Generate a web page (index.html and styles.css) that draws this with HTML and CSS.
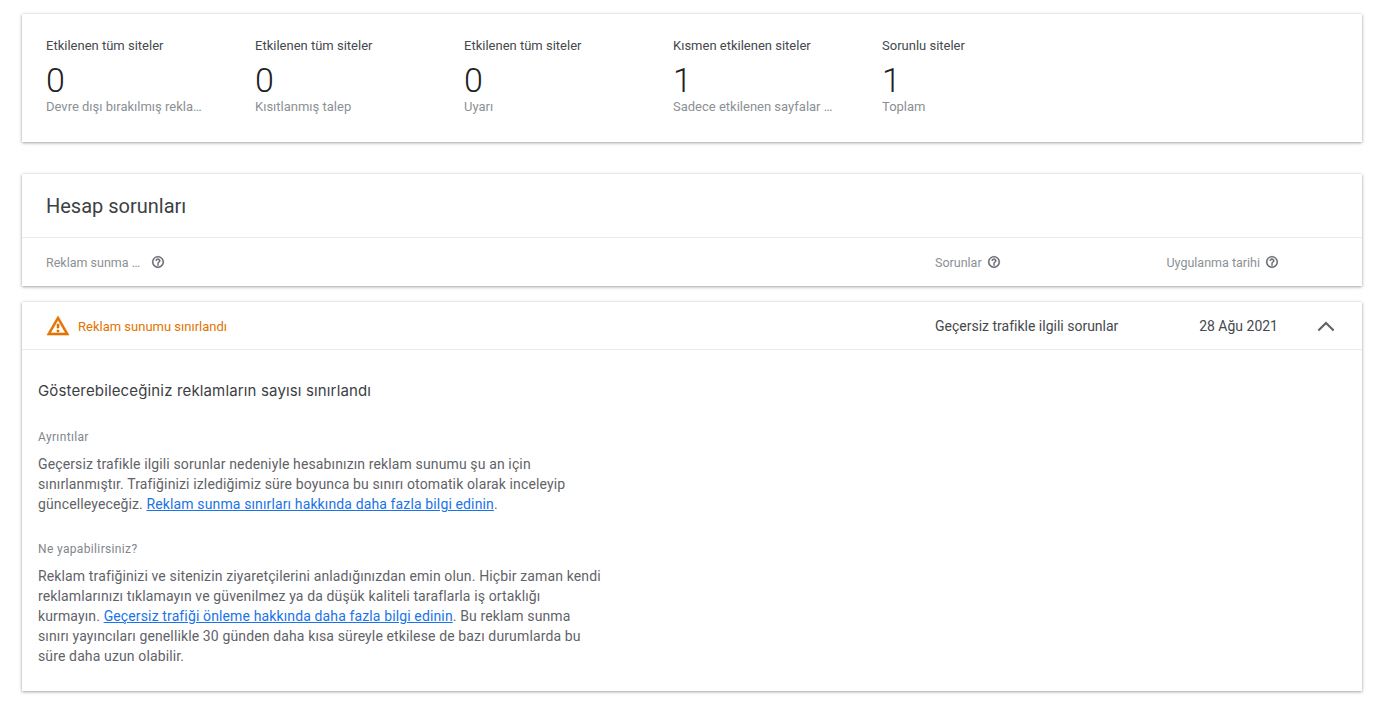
FILE: index.html
```html
<!DOCTYPE html>
<html lang="tr">
<head>
    <meta name='viewport' content='width=device-width, initial-scale=1'>
    <link rel="stylesheet" href="styles.css">
    <title>Hesap sorunları</title>
</head>
<body>
<main>
    <section class="card summary">
        <div class="stat">
            <div class="statLabel">Etkilenen tüm siteler</div>
            <div class="statValue">0</div>
            <div class="statNote">Devre dışı bırakılmış reklam sunumu</div>
        </div>
        <div class="stat">
            <div class="statLabel">Etkilenen tüm siteler</div>
            <div class="statValue">0</div>
            <div class="statNote">Kısıtlanmış talep</div>
        </div>
        <div class="stat">
            <div class="statLabel">Etkilenen tüm siteler</div>
            <div class="statValue">0</div>
            <div class="statNote">Uyarı</div>
        </div>
        <div class="stat">
            <div class="statLabel">Kısmen etkilenen siteler</div>
            <div class="statValue">1</div>
            <div class="statNote">Sadece etkilenen sayfalar için</div>
        </div>
        <div class="stat">
            <div class="statLabel">Sorunlu siteler</div>
            <div class="statValue">1</div>
            <div class="statNote">Toplam</div>
        </div>
    </section>

    <section class="card issues">
        <h1>Hesap sorunları</h1>
        <div class="tableHead">
            <div class="colStatus">
                <span class="headShort">Reklam sunma durumu</span>
                <svg class="help" viewBox="0 0 24 24"><path d="M11 18h2v-2h-2v2zm1-16C6.48 2 2 6.48 2 12s4.48 10 10 10 10-4.48 10-10S17.52 2 12 2zm0 18c-4.41 0-8-3.59-8-8s3.59-8 8-8 8 3.59 8 8-3.59 8-8 8zm0-14c-2.21 0-4 1.79-4 4h2c0-1.1.9-2 2-2s2 .9 2 2c0 2-3 1.75-3 5h2c0-2.25 3-2.5 3-5 0-2.21-1.79-4-4-4z"/></svg>
            </div>
            <div class="colIssue">
                <span>Sorunlar</span>
                <svg class="help" viewBox="0 0 24 24"><path d="M11 18h2v-2h-2v2zm1-16C6.48 2 2 6.48 2 12s4.48 10 10 10 10-4.48 10-10S17.52 2 12 2zm0 18c-4.41 0-8-3.59-8-8s3.59-8 8-8 8 3.59 8 8-3.59 8-8 8zm0-14c-2.21 0-4 1.79-4 4h2c0-1.1.9-2 2-2s2 .9 2 2c0 2-3 1.75-3 5h2c0-2.25 3-2.5 3-5 0-2.21-1.79-4-4-4z"/></svg>
            </div>
            <div class="colDate">
                <span>Uygulanma tarihi</span>
                <svg class="help" viewBox="0 0 24 24"><path d="M11 18h2v-2h-2v2zm1-16C6.48 2 2 6.48 2 12s4.48 10 10 10 10-4.48 10-10S17.52 2 12 2zm0 18c-4.41 0-8-3.59-8-8s3.59-8 8-8 8 3.59 8 8-3.59 8-8 8zm0-14c-2.21 0-4 1.79-4 4h2c0-1.1.9-2 2-2s2 .9 2 2c0 2-3 1.75-3 5h2c0-2.25 3-2.5 3-5 0-2.21-1.79-4-4-4z"/></svg>
            </div>
            <div class="colToggle"></div>
        </div>
    </section>

    <section class="card detail">
        <div class="detailRow">
            <div class="colStatus warn">
                <svg class="warnIcon" viewBox="0 0 24 24"><path d="M12 5.99L19.53 19H4.47L12 5.99M12 2L1 21h22L12 2zm1 14h-2v2h2v-2zm0-6h-2v4h2v-4z"/></svg>
                <span>Reklam sunumu sınırlandı</span>
            </div>
            <div class="colIssue">Geçersiz trafikle ilgili sorunlar</div>
            <div class="colDate">28 Ağu 2021</div>
            <div class="colToggle">
                <svg class="chevron" viewBox="0 0 24 24"><polyline points="6.6,15.2 12,9.8 17.4,15.2"/></svg>
            </div>
        </div>
        <div class="detailBody">
            <h2>Gösterebileceğiniz reklamların sayısı sınırlandı</h2>
            <h3>Ayrıntılar</h3>
            <p>Geçersiz trafikle ilgili sorunlar nedeniyle hesabınızın reklam sunumu şu an için sınırlanmıştır. Trafiğinizi izlediğimiz süre boyunca bu sınırı otomatik olarak inceleyip güncelleyeceğiz. <a href="#">Reklam sunma sınırları hakkında daha fazla bilgi edinin</a>.</p>
            <h3>Ne yapabilirsiniz?</h3>
            <p>Reklam trafiğinizi ve sitenizin ziyaretçilerini anladığınızdan emin olun. Hiçbir zaman kendi reklamlarınızı tıklamayın ve güvenilmez ya da düşük kaliteli taraflarla iş ortaklığı kurmayın. <a href="#">Geçersiz trafiği önleme hakkında daha fazla bilgi edinin</a>. Bu reklam sunma sınırı yayıncıları genellikle 30 günden daha kısa süreyle etkilese de bazı durumlarda bu süre daha uzun olabilir.</p>
        </div>
    </section>
</main>
</body>
</html>
```

FILE: styles.css
```css
html, body { margin: 0; padding: 0; background-color: #fff; font-family: Roboto, sans-serif; color: #202124; }
main { display: flex; flex-direction: column; padding: 14px 26px 30px 22px; }
h1, h2, h3, p { margin: 0; font-weight: normal; }

.card { background-color: #fff; box-shadow: 0 1px 3px rgba(60, 64, 67, .45), 0 0 2px rgba(60, 64, 67, .12); }

/* summary */
.summary { display: flex; height: 128px; padding: 24px 24px 0; box-sizing: border-box; margin-bottom: 32px; }
.stat { width: 160px; margin-right: 49px; }
.statLabel { font-size: 13px; line-height: 16px; color: #45494d; }
.statValue { font-size: 34px; font-weight: 300; line-height: 40px; margin-top: 6px; color: #202124; }
.statNote { font-size: 13px; line-height: 16px; margin-top: -1px; color: #8b9095; white-space: nowrap; overflow: hidden; text-overflow: ellipsis; }

/* table columns */
.tableHead, .detailRow { display: flex; align-items: center; padding-left: 24px; }
.colStatus { display: flex; align-items: center; width: 889px; }
.colIssue { display: flex; align-items: center; width: 231px; }
.colDate { display: flex; align-items: center; justify-content: flex-end; width: 112px; flex-shrink: 0; white-space: nowrap; }
.colToggle { display: flex; justify-content: flex-end; width: 65px; }

/* account issues */
.issues { height: 112px; margin-bottom: 16px; }
.issues h1 { font-size: 20px; line-height: 65px; height: 63px; padding-left: 24px; border-bottom: 1px solid #e8eaed; color: #3c4043; }
.tableHead { height: 48px; font-size: 12.5px; color: #8b9095; }
.headShort { display: block; width: 95px; white-space: nowrap; overflow: hidden; text-overflow: ellipsis; }
.help { width: 14px; height: 14px; margin-left: 5px; fill: #5f6368; stroke: #5f6368; stroke-width: .6; flex-shrink: 0; }
.colStatus .help { margin-left: 10px; }
.colDate .help { margin-right: -1px; }

/* expanded row */
.detail { height: 389px; }
.detailRow { height: 47px; border-bottom: 1px solid #e8eaed; font-size: 14px; color: #45494d; }
.warn { color: #e37400; font-size: 13px; padding-top: 1px; }
.warnIcon { width: 24px; height: 24px; fill: #e37400; stroke: #e37400; stroke-width: .6; margin-right: 8px; margin-top: -1px; }
.chevron { width: 34px; height: 34px; fill: none; stroke: #5f6368; stroke-width: 1.5; }

.detailBody { padding: 31px 16px 0; width: 565px; }
.detailBody h2 { font-family: Inter, sans-serif; font-size: 15px; letter-spacing: .15px; line-height: 20px; color: #3c4043; margin-bottom: 28px; }
.detailBody h3 { font-size: 12px; letter-spacing: .35px; line-height: 16px; color: #80868b; margin-bottom: 9px; }
.detailBody p { font-size: 14px; letter-spacing: .13px; line-height: 20px; color: #5f6368; margin-bottom: 27px; }
.detailBody a { color: #1a73e8; }
```
